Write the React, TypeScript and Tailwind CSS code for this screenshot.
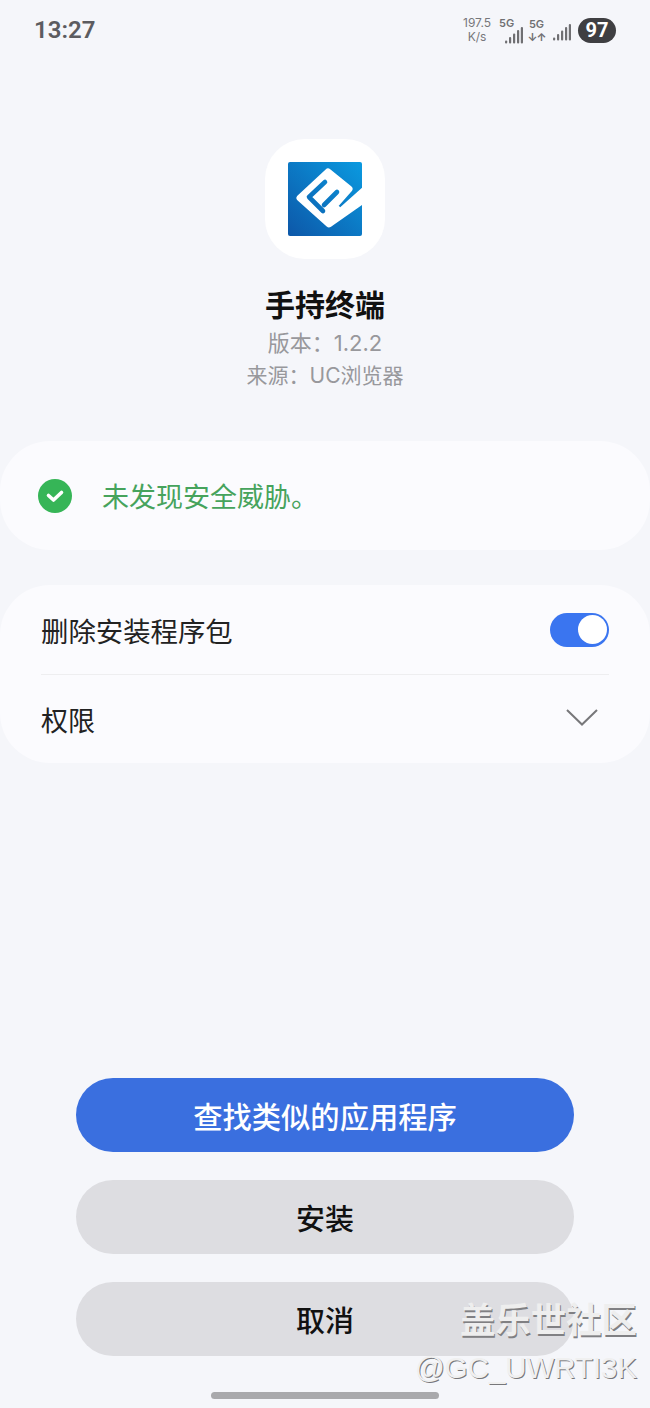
const cjk = "font-['Inter','Noto_Sans_CJK_SC',sans-serif]";

function Signal({ className }: { className?: string }) {
  return (
    <svg viewBox="0 0 18 17" className={className} fill="#6f6f72">
      <rect x="0" y="13.5" width="2.2" height="3" rx="1" />
      <rect x="4" y="10" width="2.2" height="6.5" rx="1" />
      <rect x="8" y="6.5" width="2.2" height="10" rx="1" />
      <rect x="12" y="3" width="2.2" height="13.5" rx="1" />
      <rect x="15.8" y="0" width="2.2" height="16.5" rx="1" />
    </svg>
  );
}

function AppLogo() {
  return (
    <svg viewBox="0 0 74 74" className="w-[74px] h-[74px]">
      <defs>
        <linearGradient id="logoBg" gradientUnits="userSpaceOnUse" x1="74" y1="0" x2="0" y2="74">
          <stop offset="0" stopColor="#0a9ae0" />
          <stop offset="1" stopColor="#0d57a8" />
        </linearGradient>
        <clipPath id="logoClip">
          <rect width="74" height="74" rx="2" />
        </clipPath>
      </defs>
      <rect width="74" height="74" rx="2" fill="url(#logoBg)" />
      <g clipPath="url(#logoClip)">
        {/* white E body with the tail running off to the right */}
        <path
          d="M40 10 L61 27 L46 44 L52 50 L78 27 L78 36 L41 62 L12 36 Z"
          fill="#fff"
          stroke="#fff"
          strokeWidth="7"
          strokeLinejoin="round"
        />
        {/* channels between the prongs */}
        <g fill="none" stroke="url(#logoBg)" strokeWidth="4.6" strokeLinecap="round" strokeLinejoin="round">
          <path d="M37 20 L21 35 L35 49" />
          <path d="M49 30 L36 43" />
        </g>
      </g>
    </svg>
  );
}

export default function App() {
  return (
    <div className={`relative w-[650px] h-[1408px] overflow-hidden bg-[#f5f6fa] flex flex-col ${cjk}`}>
      {/* status bar */}
      <div className="h-[60px] flex items-center justify-between px-[34px] shrink-0">
        <span className="text-[24px] font-semibold text-[#5c5c60] font-['Roboto',sans-serif]">13:27</span>
        <div className="flex items-center">
          <div className="flex flex-col items-center text-[12px] leading-[14px] text-[#77777b] mr-[8px]">
            <span>197.5</span>
            <span>K/s</span>
          </div>
          <div className="relative w-[24px] h-[26px] mr-[5px]">
            <span className="absolute left-0 top-[-1px] text-[11px] leading-[14px] font-semibold text-[#6f6f72]">5G</span>
            <Signal className="absolute right-0 bottom-[-1px] w-[18px] h-[17px]" />
          </div>
          <div className="w-[17px] flex flex-col items-center text-[#6f6f72] mr-[8px]">
            <span className="text-[11px] leading-[13px] font-semibold">5G</span>
            <span className="text-[11px] leading-[12px] font-bold tracking-[-1px]">↓↑</span>
          </div>
          <Signal className="w-[18px] h-[17px] mr-[7px] mt-[5px]" />
          <div className="w-[38px] h-[25px] rounded-full bg-[#3f3f42] text-white text-[20px] leading-[25px] font-bold flex items-center justify-center font-['Roboto',sans-serif]">97</div>
        </div>
      </div>

      {/* app info */}
      <div className="flex flex-col items-center mt-[79px]">
        <div className="w-[120px] h-[120px] rounded-[40px] bg-white flex items-center justify-center">
          <AppLogo />
        </div>
        <p className="mt-[24px] text-[30px] leading-[44px] font-bold text-[#111]">手持终端</p>
        <p className="mt-[-1px] text-[22px] leading-[34px] text-[#98989c]">版本：1.2.2</p>
        <p className="text-[21px] leading-[32px] text-[#98989c]">来源：UC浏览器</p>
      </div>

      {/* security card */}
      <div className="mt-[49px] h-[109px] rounded-[50px] bg-[#fbfbfe] flex items-center pl-[38px]">
        <svg viewBox="0 0 34 34" className="w-[34px] h-[34px] mr-[30px]">
          <circle cx="17" cy="17" r="17" fill="#36b557" />
          <path d="M10.5 16.5 L15.5 21 L23.5 13.5" fill="none" stroke="#fff" strokeWidth="3.6" strokeLinecap="round" strokeLinejoin="round" />
        </svg>
        <span className="pt-[5px] text-[27px] text-[#46a35c]">未发现安全威胁。</span>
      </div>

      {/* options card */}
      <div className="mt-[35px] h-[178px] rounded-[50px] bg-[#fbfbfe] px-[41px] flex flex-col">
        <div className="h-[90px] flex items-center justify-between border-b border-[#eeeef0]">
          <span className="pt-[6px] text-[27.4px] text-[#222]">删除安装程序包</span>
          <div className="w-[59px] h-[34px] rounded-full bg-[#3a75f0] flex items-center justify-end pr-[2px]">
            <div className="w-[29px] h-[29px] rounded-full bg-white" />
          </div>
        </div>
        <div className="flex-1 flex items-center justify-between">
          <span className="pt-[6px] text-[27px] text-[#222]">权限</span>
          <svg viewBox="0 0 32 17" className="w-[32px] h-[17px] mr-[11px] mt-[-4px]" fill="none" stroke="#77777a" strokeWidth="2">
            <path d="M1 1 L16 15.5 L31 1" />
          </svg>
        </div>
      </div>

      {/* buttons */}
      <div className="mt-auto mb-[52px] flex flex-col items-center gap-[28px]">
        <button className="w-[498px] h-[74px] pt-[5px] rounded-full bg-[#3a6fdf] text-white text-[29.3px] font-medium">查找类似的应用程序</button>
        <button className="w-[498px] h-[74px] pt-[5px] rounded-full bg-[#dddde1] text-[#111] text-[29px] font-medium">安装</button>
        <button className="w-[498px] h-[74px] pt-[5px] rounded-full bg-[#dddde1] text-[#111] text-[29px] font-medium">取消</button>
      </div>

      {/* home indicator */}
      <div className="absolute left-[211px] bottom-[9px] w-[228px] h-[7px] rounded-full bg-[#a9a9ac]" />

      {/* watermark */}
      <div className="absolute right-[13px] top-[1300px] text-[35.4px] leading-[42px] font-bold text-[#eeeeee] [text-shadow:1px_2px_0_#808083]">盖乐世社区</div>
      <div className="absolute right-[13px] top-[1349px] text-[29.4px] leading-[38px] text-[#f0f0f0] [text-shadow:1px_1px_0_#77777a] font-['Liberation_Sans',sans-serif]">@GC_UWRTI3K</div>
    </div>
  );
}
